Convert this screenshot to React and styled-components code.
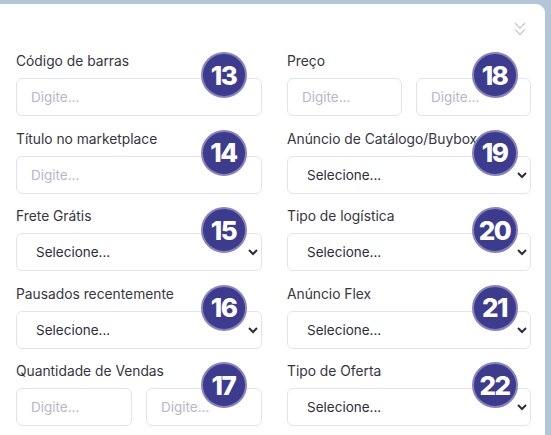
import React from 'react';
import styled, { createGlobalStyle } from 'styled-components';
import { ChevronsDown } from 'lucide-react';

const GlobalStyle = createGlobalStyle`
  html, body {
    margin: 0;
    padding: 0;
    background: #b2c5d9;
  }
  body {
    font-family: 'Inter', 'Noto Sans', sans-serif;
  }
`;

const fields = [
  { col: 'left', label: 'Código de barras', kind: 'input', n: 13 },
  { col: 'left', label: 'Título no marketplace', kind: 'input', n: 14 },
  { col: 'left', label: 'Frete Grátis', kind: 'select', n: 15 },
  { col: 'left', label: 'Pausados recentemente', kind: 'select', n: 16 },
  { col: 'left', label: 'Quantidade de Vendas', kind: 'range', n: 17 },
  { col: 'right', label: 'Preço', kind: 'range', n: 18 },
  { col: 'right', label: 'Anúncio de Catálogo/Buybox', kind: 'select', n: 19 },
  { col: 'right', label: 'Tipo de logística', kind: 'select', n: 20 },
  { col: 'right', label: 'Anúncio Flex', kind: 'select', n: 21 },
  { col: 'right', label: 'Tipo de Oferta', kind: 'select', n: 22 },
];

function Control({ kind }) {
  if (kind === 'select') {
    return (
      <Select defaultValue="">
        <option value="">Selecione...</option>
        <option value="sim">Sim</option>
        <option value="nao">Não</option>
      </Select>
    );
  }
  if (kind === 'range') {
    return (
      <Pair>
        <Input placeholder="Digite..." />
        <Input placeholder="Digite..." />
      </Pair>
    );
  }
  return <Input placeholder="Digite..." />;
}

export default function App() {
  const left = fields.filter((f) => f.col === 'left');
  const right = fields.filter((f) => f.col === 'right');

  return (
    <>
      <GlobalStyle />
      <Card>
        <Header>
          <ChevronsDown size={22} color="#c6c6d2" strokeWidth={1.4} />
        </Header>
        <Grid>
          {[left, right].map((column, i) => (
            <Column key={i}>
              {column.map((f) => (
                <Field key={f.n}>
                  <Label>{f.label}</Label>
                  <Control kind={f.kind} />
                  <Badge $right={i === 0 ? 15 : 13}>{f.n}</Badge>
                </Field>
              ))}
            </Column>
          ))}
        </Grid>
      </Card>
    </>
  );
}

const Card = styled.div`
  margin: 4px 6px 0 0;
  background: #ffffff;
  border-top-right-radius: 9px;
  min-height: 431px;
  padding: 0 14px 0 16px;
  box-sizing: border-box;
`;

const Header = styled.div`
  display: flex;
  justify-content: flex-end;
  padding-top: 13.5px;
  height: 35.5px;
  box-sizing: border-box;
`;

const Grid = styled.div`
  display: grid;
  grid-template-columns: 246px 244px;
  column-gap: 25px;
  padding-top: 13.5px;
`;

const Column = styled.div`
  display: flex;
  flex-direction: column;
  gap: 14.5px;
`;

const Field = styled.div`
  position: relative;
  display: flex;
  flex-direction: column;
  gap: 9px;
`;

const Label = styled.label`
  font-size: 13.8px;
  line-height: 16px;
  color: #363640;
  font-weight: 400;
  white-space: nowrap;
`;

const controlBase = `
  box-sizing: border-box;
  height: 38px;
  width: 100%;
  border: 1px solid #e3e3ec;
  border-radius: 6px;
  background: #ffffff;
  font-family: 'Inter', 'Noto Sans', sans-serif;
  font-size: 13.5px;
  outline: none;
`;

const Input = styled.input`
  ${controlBase}
  padding: 0 14px;
  color: #333;
  &::placeholder {
    color: #b7b7c6;
  }
`;

const Select = styled.select`
  ${controlBase}
  padding: 0 4px 0 15px;
  color: #2e2e3a;
`;

const Pair = styled.div`
  display: grid;
  grid-template-columns: 1fr 1fr;
  column-gap: 14px;
`;

const Badge = styled.div`
  position: absolute;
  top: -1px;
  right: ${(p) => p.$right}px;
  width: 46px;
  height: 46px;
  box-sizing: border-box;
  border-radius: 50%;
  background: #3d3b8d;
  border: 2px solid #8784bd;
  color: #ffffff;
  font-family: 'Inter', 'Noto Sans', sans-serif;
  font-weight: 800;
  font-size: 26px;
  letter-spacing: -1.5px;
  display: flex;
  align-items: center;
  justify-content: center;
  padding-right: 1px;
`;
